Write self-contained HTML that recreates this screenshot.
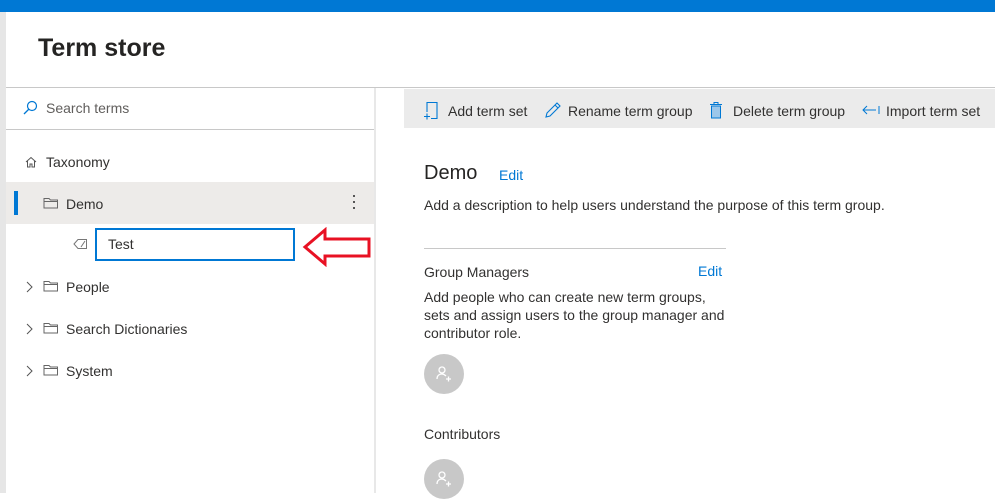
<!DOCTYPE html>
<html><head><style>
body{margin:0;width:995px;height:493px;overflow:hidden;background:#fff;font-family:"Liberation Sans",sans-serif;color:#323130;position:relative}
.a{position:absolute}
.t{font-size:14px;white-space:nowrap}
</style></head><body>
<div class="a" style="left:0;top:0;width:995px;height:12px;background:#0078d4"></div>
<div class="a" style="left:0;top:12px;width:6px;height:481px;background:#e6e6e6"></div>
<div class="a" style="left:38px;top:34px;font-size:25px;font-weight:bold;color:#252423">Term store</div>
<div class="a" style="left:6px;top:87px;width:989px;height:1px;background:#c8c8c8"></div>
<div class="a" style="left:374px;top:88px;width:2px;height:405px;background:#e8e8e8"></div>
<svg class="a" style="left:22px;top:100px" width="16" height="16" viewBox="0 0 16 16"><circle cx="10" cy="6" r="4.5" fill="none" stroke="#0078d4" stroke-width="1.2"/><path d="M7 9L2 14" stroke="#0078d4" stroke-width="1.3"/></svg>
<div class="a t" style="left:46px;top:100px;color:#605e5c">Search terms</div>
<div class="a" style="left:6px;top:129px;width:368px;height:1px;background:#c8c8c8"></div>
<svg class="a" style="left:24px;top:155px" width="14" height="14" viewBox="0 0 14 14"><path d="M2 7L7 2.5L12 7M3.5 6V12H6V9H8V12H10.5V6" fill="none" stroke="#555" stroke-width="1"/></svg>
<div class="a t" style="left:46px;top:154px">Taxonomy</div>
<div class="a" style="left:6px;top:182px;width:368px;height:42px;background:#edebe9"></div>
<div class="a" style="left:14px;top:191px;width:4px;height:24px;background:#0078d4"></div>
<svg class="a" style="left:43px;top:197px" width="16" height="12" viewBox="0 0 16 12"><path d="M1 1.5H6L7.5 3H14.5V11H1Z M1 4.5H14.5" fill="none" stroke="#666" stroke-width="1"/></svg>
<div class="a t" style="left:66px;top:196px">Demo</div>
<div class="a" style="left:353px;top:195px;width:2px;height:2px;background:#555;box-shadow:0 6px 0 #555,0 12px 0 #555"></div>
<svg class="a" style="left:73px;top:238px" width="15" height="12" viewBox="0 0 15 12"><path d="M1 6L5 1.5H13.5V10.5H5Z M8 9L12 3" fill="none" stroke="#777" stroke-width="1"/></svg>
<div class="a" style="left:95px;top:228px;width:196px;height:29px;border:2px solid #0078d4"></div>
<div class="a t" style="left:108px;top:236px">Test</div>
<svg class="a" style="left:302px;top:227px" width="70" height="40" viewBox="0 0 70 40"><path d="M3 20L23 3V12H67V29H23V37Z" fill="#fff" stroke="#e81123" stroke-width="3"/></svg>
<svg class="a" style="left:24px;top:281px" width="10" height="12" viewBox="0 0 10 12"><path d="M3 1L8 6L3 11" fill="none" stroke="#555"/></svg>
<svg class="a" style="left:43px;top:280px" width="16" height="12" viewBox="0 0 16 12"><path d="M1 1.5H6L7.5 3H14.5V11H1Z M1 4.5H14.5" fill="none" stroke="#666" stroke-width="1"/></svg>
<div class="a t" style="left:66px;top:279px">People</div>
<svg class="a" style="left:24px;top:323px" width="10" height="12" viewBox="0 0 10 12"><path d="M3 1L8 6L3 11" fill="none" stroke="#555"/></svg>
<svg class="a" style="left:43px;top:322px" width="16" height="12" viewBox="0 0 16 12"><path d="M1 1.5H6L7.5 3H14.5V11H1Z M1 4.5H14.5" fill="none" stroke="#666" stroke-width="1"/></svg>
<div class="a t" style="left:66px;top:321px">Search Dictionaries</div>
<svg class="a" style="left:24px;top:365px" width="10" height="12" viewBox="0 0 10 12"><path d="M3 1L8 6L3 11" fill="none" stroke="#555"/></svg>
<svg class="a" style="left:43px;top:364px" width="16" height="12" viewBox="0 0 16 12"><path d="M1 1.5H6L7.5 3H14.5V11H1Z M1 4.5H14.5" fill="none" stroke="#666" stroke-width="1"/></svg>
<div class="a t" style="left:66px;top:363px">System</div>
<div class="a" style="left:404px;top:89px;width:591px;height:39px;background:#ebebeb"></div>
<svg class="a" style="left:423px;top:101px" width="18" height="19" viewBox="0 0 18 19"><path d="M4 11V1.5H14V17.5H8 M14 14V17.5 M1 15.5H7 M4 12.5V18.5" fill="none" stroke="#0078d4" stroke-width="1.1"/></svg>
<div class="a t" style="left:448px;top:103px">Add term set</div>
<svg class="a" style="left:544px;top:101px" width="18" height="18" viewBox="0 0 18 18"><path d="M2 16L3 12L13 2L16 5L6 15Z M11 4L14 7" fill="none" stroke="#0078d4" stroke-width="1.1"/></svg>
<div class="a t" style="left:568px;top:103px">Rename term group</div>
<svg class="a" style="left:709px;top:101px" width="14" height="18" viewBox="0 0 14 18"><path d="M1 3.5H13 M5 3.5V1.5H9V3.5" fill="none" stroke="#0078d4"/><rect x="2.5" y="5" width="9" height="12" fill="#9cc7ea" stroke="#0078d4"/></svg>
<div class="a t" style="left:733px;top:103px">Delete term group</div>
<svg class="a" style="left:862px;top:104px" width="18" height="12" viewBox="0 0 18 12"><path d="M1 6H14 M5 2L1 6L5 10 M17 2V10" fill="none" stroke="#0078d4"/></svg>
<div class="a t" style="left:886px;top:103px">Import term set</div>
<div class="a" style="left:424px;top:162px;font-size:20px;color:#252423">Demo</div>
<div class="a t" style="left:499px;top:167px;color:#0078d4">Edit</div>
<div class="a t" style="left:424px;top:197px">Add a description to help users understand the purpose of this term group.</div>
<div class="a" style="left:424px;top:248px;width:302px;height:1px;background:#c8c8c8"></div>
<div class="a t" style="left:424px;top:264px">Group Managers</div>
<div class="a t" style="left:698px;top:263px;color:#0078d4">Edit</div>
<div class="a" style="left:424px;top:288px;font-size:14px;line-height:18px;width:302px">Add people who can create new term groups, sets and assign users to the group manager and contributor role.</div>
<div class="a" style="left:424px;top:354px;width:40px;height:40px;border-radius:50%;background:#c8c8c8"></div>
<svg class="a" style="left:434px;top:364px" width="20" height="20" viewBox="0 0 20 20"><circle cx="8" cy="6" r="3" fill="none" stroke="#fff" stroke-width="1.3"/><path d="M3 15C3 11 6 10 8 10C10 10 11 11 12 12 M12 15H17 M14.5 12.5V17.5" fill="none" stroke="#fff" stroke-width="1.3"/></svg>
<div class="a t" style="left:424px;top:426px">Contributors</div>
<div class="a" style="left:424px;top:459px;width:40px;height:40px;border-radius:50%;background:#c8c8c8"></div>
<svg class="a" style="left:434px;top:469px" width="20" height="20" viewBox="0 0 20 20"><circle cx="8" cy="6" r="3" fill="none" stroke="#fff" stroke-width="1.3"/><path d="M3 15C3 11 6 10 8 10C10 10 11 11 12 12 M12 15H17 M14.5 12.5V17.5" fill="none" stroke="#fff" stroke-width="1.3"/></svg>
</body></html>
